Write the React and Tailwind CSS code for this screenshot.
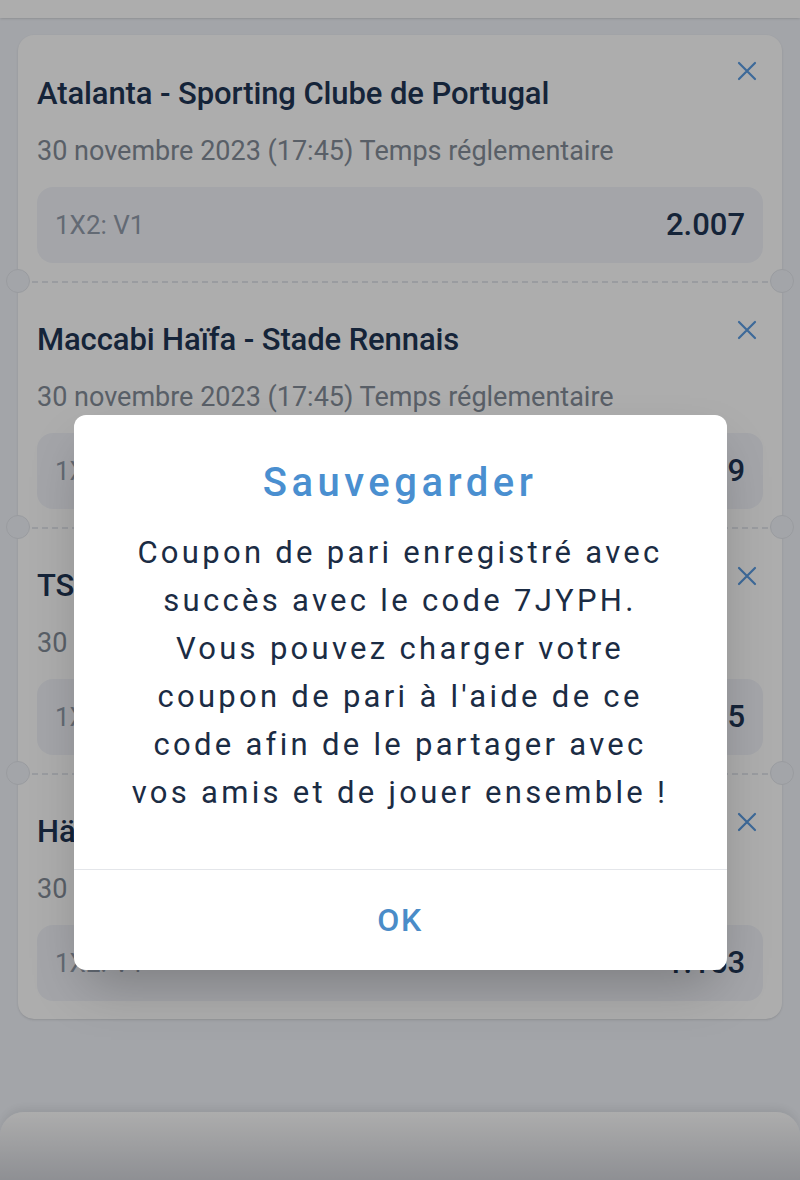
import React from 'react';

const bets = [
  { title: 'Atalanta - Sporting Clube de Portugal', odds: '2.007' },
  { title: 'Maccabi Haïfa - Stade Rennais', odds: '1.829' },
  { title: 'TSC Bačka Topola - Olympiacos', odds: '2.135' },
  { title: 'Häcken - Bayer Leverkusen', odds: '1.153' },
];

function CloseIcon() {
  return (
    <svg width="22" height="22" viewBox="0 0 22 22" fill="none" stroke="#5a9ce2" strokeWidth="2.2" strokeLinecap="round">
      <path d="M3 3 L19 19 M19 3 L3 19" />
    </svg>
  );
}

function Divider() {
  return (
    <div className="relative h-0">
      <div className="mx-[14px] border-t-2 border-dashed border-[#e3e6ec]" />
      <div className="absolute -left-[12px] -top-[12px] w-6 h-6 rounded-full bg-[#f1f4fa] border border-[#e2e5eb]" />
      <div className="absolute -right-[12px] -top-[12px] w-6 h-6 rounded-full bg-[#f1f4fa] border border-[#e2e5eb]" />
    </div>
  );
}

function BetRow({ title, odds, first, last }) {
  return (
    <>
      <div className="relative px-[19px] pt-[44px] pb-[18px]">
        <button className={first ? 'absolute right-[24px] top-[25px]' : 'absolute right-[24px] top-[38px]'}>
          <CloseIcon />
        </button>
        <div className="text-[31px] leading-[30px] font-medium text-[#1f3655] tracking-[-0.1px] whitespace-nowrap">{title}</div>
        <div className="mt-[28px] text-[27px] leading-[28px] text-[#848d99] whitespace-nowrap">
          30 novembre 2023 (17:45) Temps réglementaire
        </div>
        <div className="mt-[22px] h-[76px] rounded-2xl bg-[#f2f4fa] flex items-center justify-between pl-[18px] pr-[18px]">
          <span className="text-[26px] text-[#939cab]">1X2: V1</span>
          <span className="text-[31px] font-medium text-[#1f3655]">{odds}</span>
        </div>
      </div>
      {!last && <Divider />}
    </>
  );
}

export default function App() {
  return (
    <div className="relative w-[800px] h-[1180px] overflow-hidden bg-[#f1f4fa] font-['Roboto',sans-serif]">
      <div className="h-[18px] bg-white shadow-sm" />
      <div className="px-[18px] pt-[17px]">
        <div className="rounded-2xl bg-white shadow-sm">
          {bets.map((b, i) => (
            <BetRow key={i} {...b} first={i === 0} last={i === bets.length - 1} />
          ))}
        </div>
      </div>
      <div className="absolute left-0 right-0 bottom-0 h-[68px] rounded-t-3xl bg-gradient-to-b from-white to-[#d2d4da] shadow-[0_-4px_10px_rgba(0,0,0,0.08)]" />

      {/* modal */}
      <div className="absolute inset-0 bg-black/[0.32] flex justify-center pt-[415px]">
        <div className="w-[653px] h-[555px] bg-white rounded-xl shadow-2xl flex flex-col">
          <div className="pt-[45px] pb-[52px] px-2 text-center">
            <div className="text-[40px] leading-[46px] font-medium text-[#4a8fd0] tracking-[4.5px]">Sauvegarder</div>
            <div className="mt-[23px] text-[31px] leading-[48px] text-[#1b2c44] tracking-[3.3px] whitespace-nowrap">
              Coupon de pari enregistré avec
              <br />
              succès avec le code 7JYPH.
              <br />
              Vous pouvez charger votre
              <br />
              coupon de pari à l'aide de ce
              <br />
              code afin de le partager avec
              <br />
              vos amis et de jouer ensemble !
            </div>
          </div>
          <div className="border-t border-[#e4e6ea] flex-1 flex items-center justify-center">
            <span className="text-[32px] font-medium text-[#4a8cc8] tracking-[1.5px]">OK</span>
          </div>
        </div>
      </div>
    </div>
  );
}
